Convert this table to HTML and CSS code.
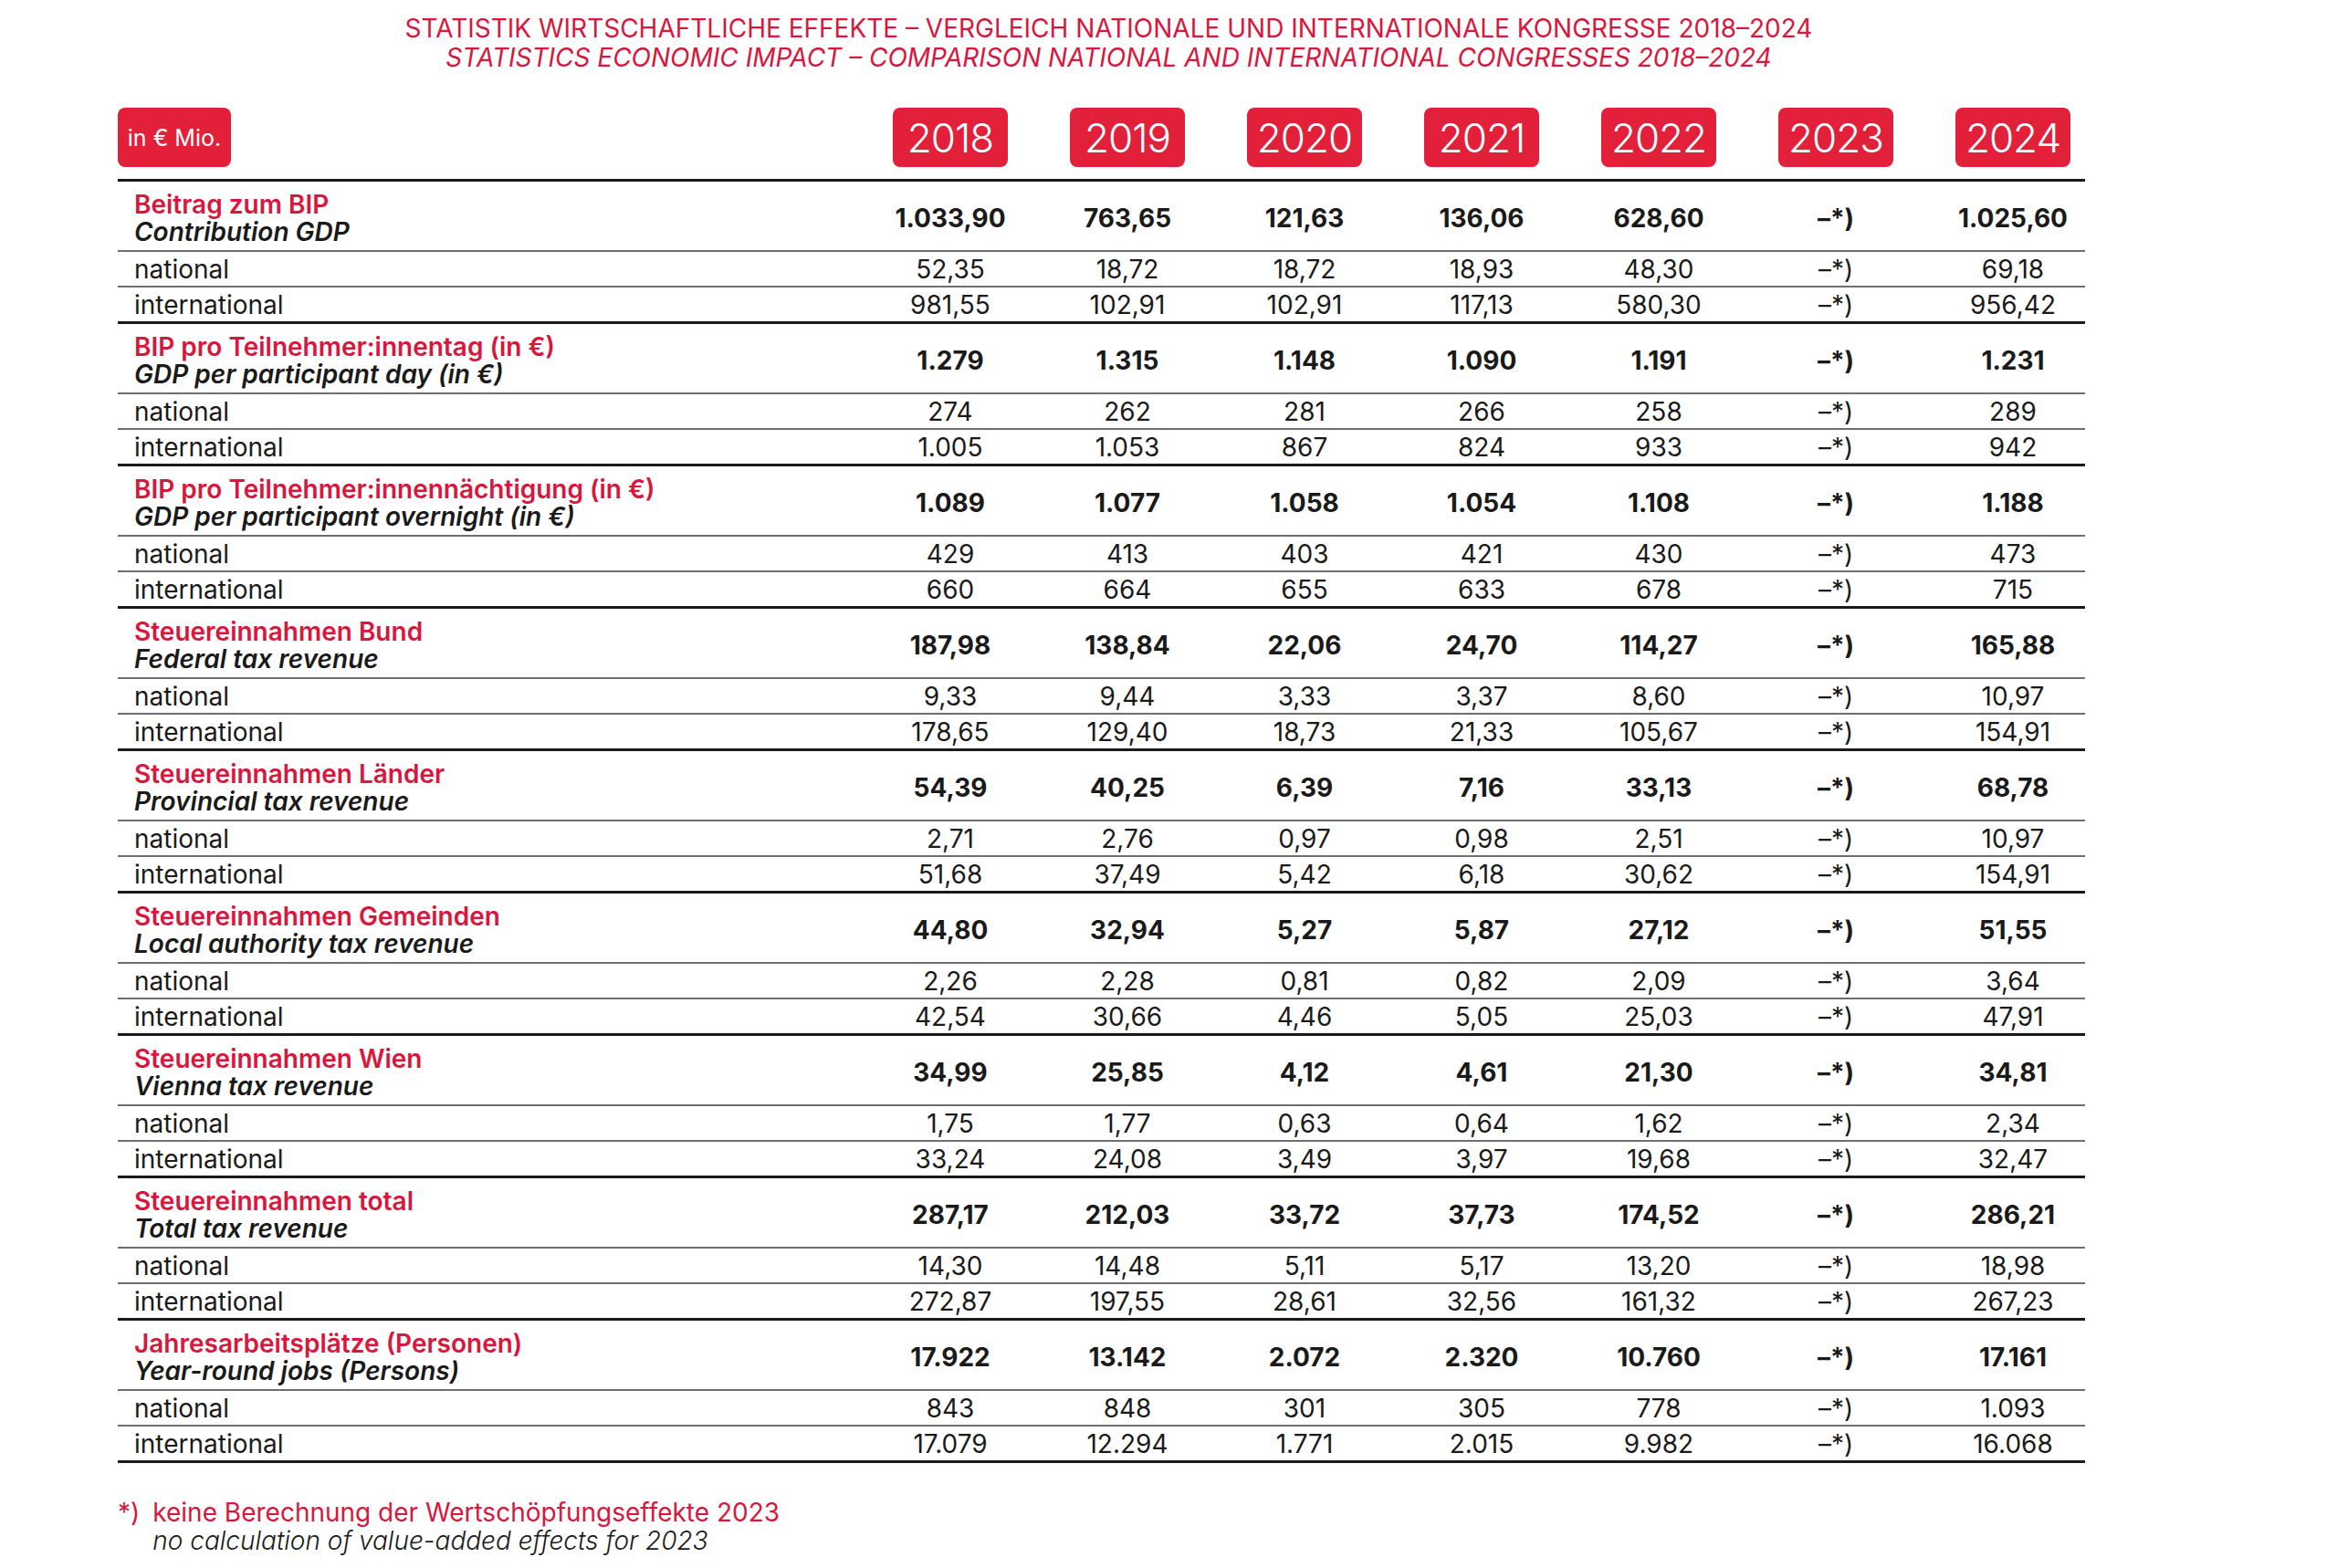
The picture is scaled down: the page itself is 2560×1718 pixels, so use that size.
FILE: index.html
```html
<!DOCTYPE html>
<html lang="de">
<head>
<meta charset="utf-8">
<title>Statistik wirtschaftliche Effekte</title>
<link rel="stylesheet" href="styles.css">
</head>
<body>
<div class="page">
  <header class="title">
    <div class="title-de">STATISTIK WIRTSCHAFTLICHE EFFEKTE – VERGLEICH NATIONALE UND INTERNATIONALE KONGRESSE 2018–2024</div>
    <div class="title-en">STATISTICS ECONOMIC IMPACT – COMPARISON NATIONAL AND INTERNATIONAL CONGRESSES 2018–2024</div>
  </header>

  <div class="row head-row">
    <div class="unit"><span class="badge unit-badge">in € Mio.</span></div>
    <div class="cell"><span class="badge year">2018</span></div>
    <div class="cell"><span class="badge year">2019</span></div>
    <div class="cell"><span class="badge year">2020</span></div>
    <div class="cell"><span class="badge year">2021</span></div>
    <div class="cell"><span class="badge year">2022</span></div>
    <div class="cell"><span class="badge year">2023</span></div>
    <div class="cell"><span class="badge year">2024</span></div>
  </div>

  <div class="table">
    <section class="group">
      <div class="row main"><div class="label"><span class="de">Beitrag zum BIP</span><span class="en">Contribution GDP</span></div>
        <div class="cell">1.033,90</div><div class="cell">763,65</div><div class="cell">121,63</div><div class="cell">136,06</div><div class="cell">628,60</div><div class="cell">–*)</div><div class="cell">1.025,60</div></div>
      <div class="row sub"><div class="label">national</div>
        <div class="cell">52,35</div><div class="cell">18,72</div><div class="cell">18,72</div><div class="cell">18,93</div><div class="cell">48,30</div><div class="cell">–*)</div><div class="cell">69,18</div></div>
      <div class="row sub"><div class="label">international</div>
        <div class="cell">981,55</div><div class="cell">102,91</div><div class="cell">102,91</div><div class="cell">117,13</div><div class="cell">580,30</div><div class="cell">–*)</div><div class="cell">956,42</div></div>
    </section>

    <section class="group">
      <div class="row main"><div class="label"><span class="de">BIP pro Teilnehmer:innentag (in €)</span><span class="en">GDP per participant day (in €)</span></div>
        <div class="cell">1.279</div><div class="cell">1.315</div><div class="cell">1.148</div><div class="cell">1.090</div><div class="cell">1.191</div><div class="cell">–*)</div><div class="cell">1.231</div></div>
      <div class="row sub"><div class="label">national</div>
        <div class="cell">274</div><div class="cell">262</div><div class="cell">281</div><div class="cell">266</div><div class="cell">258</div><div class="cell">–*)</div><div class="cell">289</div></div>
      <div class="row sub"><div class="label">international</div>
        <div class="cell">1.005</div><div class="cell">1.053</div><div class="cell">867</div><div class="cell">824</div><div class="cell">933</div><div class="cell">–*)</div><div class="cell">942</div></div>
    </section>

    <section class="group">
      <div class="row main"><div class="label"><span class="de">BIP pro Teilnehmer:innennächtigung (in €)</span><span class="en">GDP per participant overnight (in €)</span></div>
        <div class="cell">1.089</div><div class="cell">1.077</div><div class="cell">1.058</div><div class="cell">1.054</div><div class="cell">1.108</div><div class="cell">–*)</div><div class="cell">1.188</div></div>
      <div class="row sub"><div class="label">national</div>
        <div class="cell">429</div><div class="cell">413</div><div class="cell">403</div><div class="cell">421</div><div class="cell">430</div><div class="cell">–*)</div><div class="cell">473</div></div>
      <div class="row sub"><div class="label">international</div>
        <div class="cell">660</div><div class="cell">664</div><div class="cell">655</div><div class="cell">633</div><div class="cell">678</div><div class="cell">–*)</div><div class="cell">715</div></div>
    </section>

    <section class="group">
      <div class="row main"><div class="label"><span class="de">Steuereinnahmen Bund</span><span class="en">Federal tax revenue</span></div>
        <div class="cell">187,98</div><div class="cell">138,84</div><div class="cell">22,06</div><div class="cell">24,70</div><div class="cell">114,27</div><div class="cell">–*)</div><div class="cell">165,88</div></div>
      <div class="row sub"><div class="label">national</div>
        <div class="cell">9,33</div><div class="cell">9,44</div><div class="cell">3,33</div><div class="cell">3,37</div><div class="cell">8,60</div><div class="cell">–*)</div><div class="cell">10,97</div></div>
      <div class="row sub"><div class="label">international</div>
        <div class="cell">178,65</div><div class="cell">129,40</div><div class="cell">18,73</div><div class="cell">21,33</div><div class="cell">105,67</div><div class="cell">–*)</div><div class="cell">154,91</div></div>
    </section>

    <section class="group">
      <div class="row main"><div class="label"><span class="de">Steuereinnahmen Länder</span><span class="en">Provincial tax revenue</span></div>
        <div class="cell">54,39</div><div class="cell">40,25</div><div class="cell">6,39</div><div class="cell">7,16</div><div class="cell">33,13</div><div class="cell">–*)</div><div class="cell">68,78</div></div>
      <div class="row sub"><div class="label">national</div>
        <div class="cell">2,71</div><div class="cell">2,76</div><div class="cell">0,97</div><div class="cell">0,98</div><div class="cell">2,51</div><div class="cell">–*)</div><div class="cell">10,97</div></div>
      <div class="row sub"><div class="label">international</div>
        <div class="cell">51,68</div><div class="cell">37,49</div><div class="cell">5,42</div><div class="cell">6,18</div><div class="cell">30,62</div><div class="cell">–*)</div><div class="cell">154,91</div></div>
    </section>

    <section class="group">
      <div class="row main"><div class="label"><span class="de">Steuereinnahmen Gemeinden</span><span class="en">Local authority tax revenue</span></div>
        <div class="cell">44,80</div><div class="cell">32,94</div><div class="cell">5,27</div><div class="cell">5,87</div><div class="cell">27,12</div><div class="cell">–*)</div><div class="cell">51,55</div></div>
      <div class="row sub"><div class="label">national</div>
        <div class="cell">2,26</div><div class="cell">2,28</div><div class="cell">0,81</div><div class="cell">0,82</div><div class="cell">2,09</div><div class="cell">–*)</div><div class="cell">3,64</div></div>
      <div class="row sub"><div class="label">international</div>
        <div class="cell">42,54</div><div class="cell">30,66</div><div class="cell">4,46</div><div class="cell">5,05</div><div class="cell">25,03</div><div class="cell">–*)</div><div class="cell">47,91</div></div>
    </section>

    <section class="group">
      <div class="row main"><div class="label"><span class="de">Steuereinnahmen Wien</span><span class="en">Vienna tax revenue</span></div>
        <div class="cell">34,99</div><div class="cell">25,85</div><div class="cell">4,12</div><div class="cell">4,61</div><div class="cell">21,30</div><div class="cell">–*)</div><div class="cell">34,81</div></div>
      <div class="row sub"><div class="label">national</div>
        <div class="cell">1,75</div><div class="cell">1,77</div><div class="cell">0,63</div><div class="cell">0,64</div><div class="cell">1,62</div><div class="cell">–*)</div><div class="cell">2,34</div></div>
      <div class="row sub"><div class="label">international</div>
        <div class="cell">33,24</div><div class="cell">24,08</div><div class="cell">3,49</div><div class="cell">3,97</div><div class="cell">19,68</div><div class="cell">–*)</div><div class="cell">32,47</div></div>
    </section>

    <section class="group">
      <div class="row main"><div class="label"><span class="de">Steuereinnahmen total</span><span class="en">Total tax revenue</span></div>
        <div class="cell">287,17</div><div class="cell">212,03</div><div class="cell">33,72</div><div class="cell">37,73</div><div class="cell">174,52</div><div class="cell">–*)</div><div class="cell">286,21</div></div>
      <div class="row sub"><div class="label">national</div>
        <div class="cell">14,30</div><div class="cell">14,48</div><div class="cell">5,11</div><div class="cell">5,17</div><div class="cell">13,20</div><div class="cell">–*)</div><div class="cell">18,98</div></div>
      <div class="row sub"><div class="label">international</div>
        <div class="cell">272,87</div><div class="cell">197,55</div><div class="cell">28,61</div><div class="cell">32,56</div><div class="cell">161,32</div><div class="cell">–*)</div><div class="cell">267,23</div></div>
    </section>

    <section class="group">
      <div class="row main"><div class="label"><span class="de">Jahresarbeitsplätze (Personen)</span><span class="en">Year-round jobs (Persons)</span></div>
        <div class="cell">17.922</div><div class="cell">13.142</div><div class="cell">2.072</div><div class="cell">2.320</div><div class="cell">10.760</div><div class="cell">–*)</div><div class="cell">17.161</div></div>
      <div class="row sub"><div class="label">national</div>
        <div class="cell">843</div><div class="cell">848</div><div class="cell">301</div><div class="cell">305</div><div class="cell">778</div><div class="cell">–*)</div><div class="cell">1.093</div></div>
      <div class="row sub"><div class="label">international</div>
        <div class="cell">17.079</div><div class="cell">12.294</div><div class="cell">1.771</div><div class="cell">2.015</div><div class="cell">9.982</div><div class="cell">–*)</div><div class="cell">16.068</div></div>
    </section>
  </div>

  <footer class="note">
    <span class="mark">*)</span>
    <div class="note-text">
      <span class="note-de">keine Berechnung der Wertschöpfungseffekte 2023</span>
      <span class="note-en">no calculation of value-added effects for 2023</span>
    </div>
  </footer>
</div>
</body>
</html>
```

FILE: styles.css
```css
html, body {
  margin: 0;
  padding: 0;
  background: #ffffff;
}

body {
  font-family: Inter, "Noto Sans", "Liberation Sans", sans-serif;
  color: #1a1a1a;
}

.page {
  width: 2155px;
  margin-left: 129px;
  padding-top: 15px;
}

.title {
  color: #d9163c;
  font-size: 28px;
  line-height: 32px;
  font-weight: 400;
  text-align: center;
  padding-left: 16px;
}

.title-en {
  font-style: italic;
}

.row {
  display: grid;
  grid-template-columns: 781px repeat(7, 126px);
  column-gap: 68px;
  padding-right: 16px;
  align-items: center;
}

.head-row {
  margin-top: 39px;
  height: 65px;
  margin-bottom: 13px;
}

.badge {
  display: flex;
  align-items: center;
  justify-content: center;
  background: #e2203a;
  color: #ffffff;
  border-radius: 8px;
  height: 65px;
}

.unit-badge {
  width: 124px;
  font-size: 25px;
  font-weight: 400;
}

.year {
  width: 126px;
  font-size: 44px;
  font-weight: 300;
  letter-spacing: -1px;
}

.table {
  border-bottom: 3px solid #1a1a1a;
}

.group {
  border-top: 3px solid #1a1a1a;
}

.main {
  height: 75px;
}

.sub {
  height: 37px;
  border-top: 2px solid #6e6e6e;
}

.label {
  padding-left: 18px;
  font-size: 28px;
  line-height: 30px;
}

.main .label {
  display: flex;
  flex-direction: column;
  padding-top: 4px;
}

.de {
  color: #d9163c;
  font-weight: 600;
}

.en {
  font-style: italic;
  font-weight: 600;
  color: #1a1a1a;
}

.cell {
  text-align: center;
  font-size: 28px;
  white-space: nowrap;
  display: flex;
  justify-content: center;
}

.main .cell {
  font-weight: 700;
  padding-top: 4px;
}

.sub .cell {
  font-weight: 400;
}

.note {
  display: flex;
  gap: 14px;
  margin-top: 39px;
  font-size: 28px;
  line-height: 31px;
}

.mark {
  color: #d9163c;
}

.note-text {
  display: flex;
  flex-direction: column;
}

.note-de {
  color: #d9163c;
}

.note-en {
  font-style: italic;
  font-weight: 300;
  color: #1a1a1a;
}
```
